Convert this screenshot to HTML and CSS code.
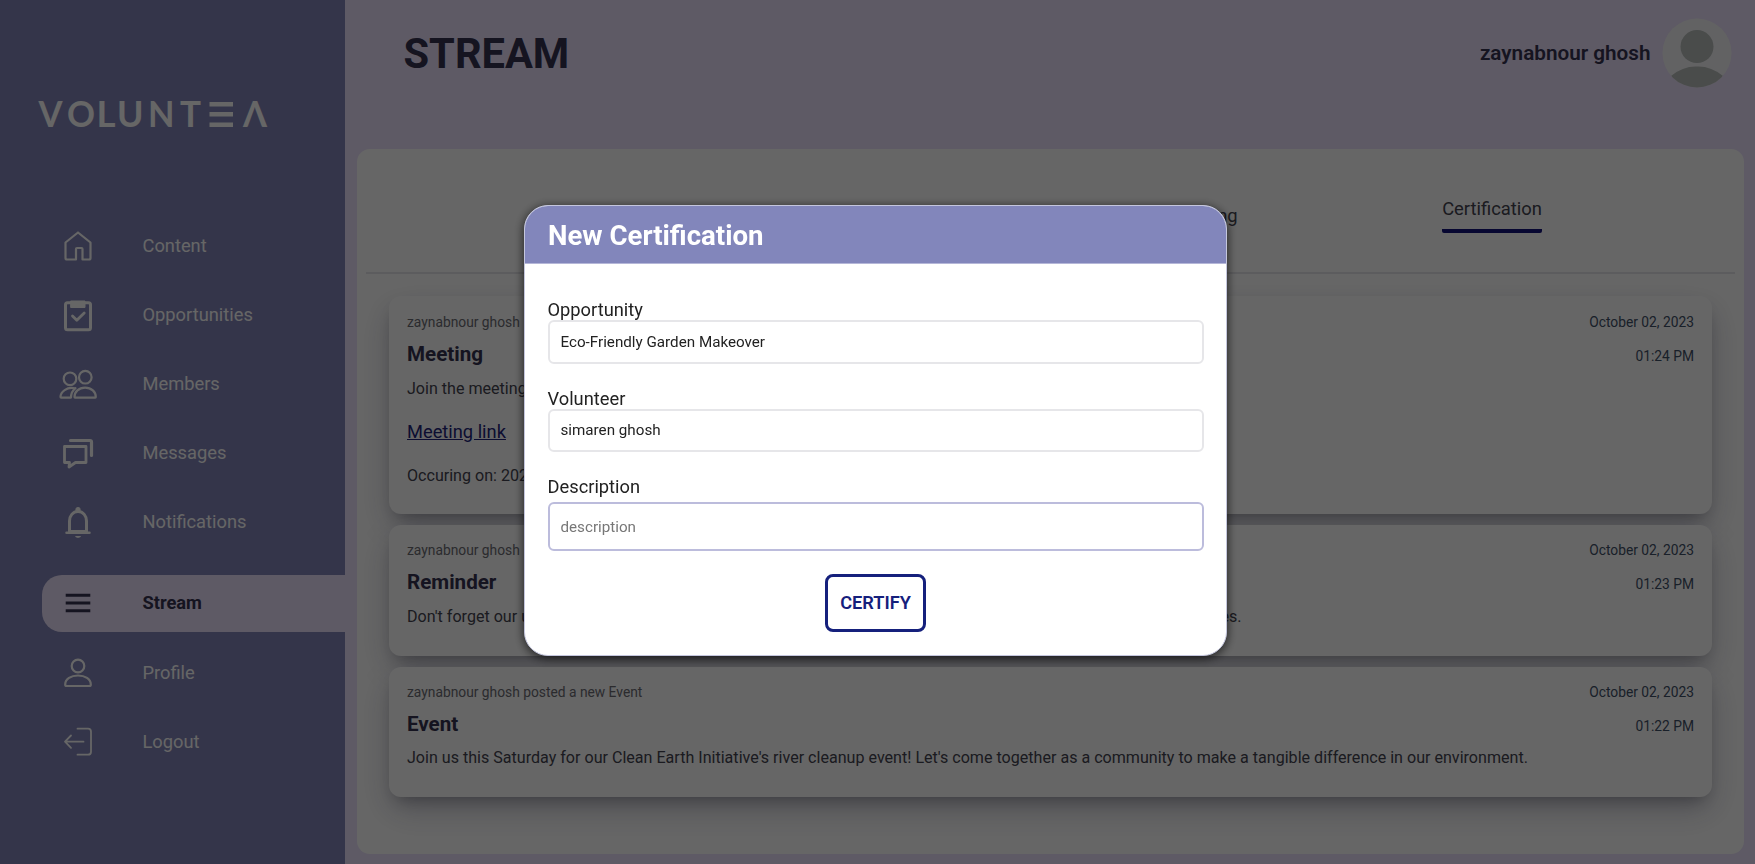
FILE: index.html
```html
<!DOCTYPE html>
<html lang="en">
<head>
<meta charset="utf-8">
<title>Voluntea - Stream</title>
<link rel="stylesheet" href="styles.css">
</head>
<body>
<div class="app">
  <aside class="sidebar">
    <svg class="logo" width="240" height="52" viewBox="0 -10 240 52" fill="#fff">
      <g class="logo-text">
        <text x="3.500" y="29" textLength="24" lengthAdjust="spacingAndGlyphs">V</text>
        <text x="32" y="29" textLength="28" lengthAdjust="spacingAndGlyphs">O</text>
        <text x="61.500" y="29" textLength="19" lengthAdjust="spacingAndGlyphs">L</text>
        <text x="82" y="29" textLength="26.500" lengthAdjust="spacingAndGlyphs">U</text>
        <text x="113" y="29" textLength="26.500" lengthAdjust="spacingAndGlyphs">N</text>
        <text x="145" y="29" textLength="21" lengthAdjust="spacingAndGlyphs">T</text>
        <text x="208" y="29" textLength="24" lengthAdjust="spacingAndGlyphs">Λ</text>
      </g>
      <rect x="174.500" y="4" width="23.500" height="4.500"/><rect x="174.500" y="14" width="23.500" height="4.500"/><rect x="174.500" y="24.500" width="23.500" height="4.500"/>
    </svg>
    <nav class="nav">
      <a class="nav-item"><svg class="icon" viewBox="0 0 40 40"><path d="M7.500 16.500 20 6.500l12.500 10V32a1.500 1.500 0 0 1-1.500 1.500h-6.500V23a1 1 0 0 0-1-1h-4.500a1 1 0 0 0-1 1v10.500H9A1.500 1.500 0 0 1 7.500 32z"/></svg><span>Content</span></a>
      <a class="nav-item"><svg class="icon" viewBox="0 0 40 40"><rect x="7.500" y="7.700" width="25" height="27" rx="2" stroke-width="3"/><path d="M13 6h14v6.500H13z" fill="#fff" stroke-width="1"/><path d="m14.500 21 4.300 4.300 7.400-7.300" stroke-width="2.800"/></svg><span>Opportunities</span></a>
      <a class="nav-item"><svg class="icon" viewBox="0 0 40 40"><circle cx="12" cy="14.800" r="6.300"/><circle cx="27.300" cy="13.200" r="6.300"/><path d="M16.500 24.300C9 22.600 2.500 28 2.500 33q0 .600.700.600H13q0-6 4.500-9.500M17 33.600h20.200q.600 0 .600-.600c0-5-4.300-9.400-10.700-9.400S16.500 28 16.500 33q0 .600.500.600z"/></svg><span>Members</span></a>
      <a class="nav-item"><svg class="icon" viewBox="0 0 40 40"><path d="M6.500 13.500h21.500v16H17.500l-6.500 4.500.500-4.500h-5z" stroke-width="2.800"/><path d="M12.500 7.500H32q1.500 0 1.500 1.500v13.500" stroke-width="3.200"/></svg><span>Messages</span></a>
      <a class="nav-item"><svg class="icon" viewBox="0 0 40 40"><path d="M11.500 29.500V19c0-5 3.300-9.500 8.500-9.500s8.500 4.500 8.500 9.500v10.500z" stroke-width="3"/><path d="M8.500 30.700h23" stroke-width="2.500"/><path d="M18 8.500V7.500a2 2 0 0 1 4 0v1M17.800 34.500a2.700 1.600 0 0 0 4.400 0z" fill="#fff" stroke-width="1.200"/></svg><span>Notifications</span></a>
      <a class="nav-item active"><svg class="icon" viewBox="0 0 40 40"><path d="M7.700 12.300h24.600M7.700 20h24.600M7.700 27.700h24.600" stroke-width="3" stroke-linecap="butt"/></svg><span>Stream</span></a>
      <a class="nav-item"><svg class="icon" viewBox="0 0 40 40"><circle cx="20" cy="13" r="6.300"/><path d="M7.200 31.500c0-5.500 5.800-9 12.800-9s12.800 3.500 12.800 9q0 1.500-1.300 1.500h-23q-1.300 0-1.300-1.500z"/></svg><span>Profile</span></a>
      <a class="nav-item"><svg class="icon" viewBox="0 0 40 40"><path d="M19.500 6.700H30q3 0 3 3v20q0 3-3 3H19.500M25.500 19.700H7.200M13 13.500l-6 6.200 6 6.200" stroke-width="1.800"/></svg><span>Logout</span></a>
    </nav>
  </aside>
  <main class="main">
    <header class="topbar">
      <h1 class="page-title">STREAM</h1>
      <div class="user"><span class="user-name">zaynabnour ghosh</span>
        <svg class="avatar" viewBox="0 0 70 70"><clipPath id="round"><circle cx="35" cy="35" r="34.500"/></clipPath><circle cx="35" cy="35" r="34.500" fill="#f5f5f7"/><g clip-path="url(#round)" fill="#b8bdbb"><circle cx="35" cy="28.600" r="16.500"/><path d="M9 58Q21 48 35 48.500 49 48 61 58L50 74H20z"/></g></svg>
      </div>
    </header>
    <section class="panel">
      <div class="tabs"><span class="tab">Meeting</span><span class="tab selected">Certification</span></div>
      <div class="posts">
        <article class="post tall">
          <div class="post-body"><p class="author">zaynabnour ghosh</p><h2 class="post-title">Meeting</h2><p class="post-text">Join the meeting</p><a class="link">Meeting link</a><p class="post-text">Occuring on: 2023</p></div>
          <div class="stamp"><span>October 02, 2023</span><span>01:24 PM</span></div>
        </article>
        <article class="post">
          <div class="post-body"><p class="author">zaynabnour ghosh</p><h2 class="post-title">Reminder</h2><div class="split-text"><p class="post-text">Don't forget our u</p><p class="post-text">es.</p></div></div>
          <div class="stamp"><span>October 02, 2023</span><span>01:23 PM</span></div>
        </article>
        <article class="post">
          <div class="post-body"><p class="author">zaynabnour ghosh posted a new Event</p><h2 class="post-title">Event</h2><p class="post-text">Join us this Saturday for our Clean Earth Initiative's river cleanup event! Let's come together as a community to make a tangible difference in our environment.</p></div>
          <div class="stamp"><span>October 02, 2023</span><span>01:22 PM</span></div>
        </article>
      </div>
    </section>
  </main>
</div>
<div class="overlay">
  <form class="modal">
    <h2 class="modal-title">New Certification</h2>
    <div class="modal-body">
      <label class="field"><span>Opportunity</span><input class="input" value="Eco-Friendly Garden Makeover"></label>
      <label class="field"><span>Volunteer</span><input class="input" value="simaren ghosh"></label>
      <label class="field last"><span>Description</span><input class="input outlined" placeholder="description"></label>
      <button class="certify" type="button">CERTIFY</button>
    </div>
  </form>
</div>
</body>
</html>
```
FILE: styles.css
```css
* { box-sizing: border-box; }
body { margin: 0; font-family: Roboto, "Liberation Sans", sans-serif; color: #363250; overflow: hidden; }
h1, h2, p { margin: 0; }
.app { display: flex; width: 1755px; height: 864px; background: #ebe1fc; }

.sidebar { width: 345px; padding: 88px 0 0; background: #8285b9; display: flex; flex-direction: column; }
.logo { display: block; margin-left: 35px; overflow: visible; flex: none; }
.logo-text { font: 700 35.5px Lato, sans-serif; }
.nav { margin: 77px 0 0 42px; display: flex; flex-direction: column; gap: 12.2px; }
.nav-item { height: 57px; display: flex; align-items: center; gap: 44.5px; padding-left: 16px; color: #fff; font-size: 18.3px; font-weight: 450; }
.nav-item.active { margin-top: 12px; background: #ebe1fc; border-radius: 20px 0 0 20px; color: #363250; font-weight: 700; }
.nav-item span { position: relative; top: -.5px; }
.icon { width: 40px; height: 40px; fill: none; stroke: currentColor; stroke-width: 2.2; stroke-linejoin: round; stroke-linecap: round; }

.main { flex: 1; padding: 0 11px 10px 12px; display: flex; flex-direction: column; }
.topbar { height: 149px; display: flex; justify-content: space-between; align-items: flex-start; padding: 18px 12px 0 46.5px; }
.page-title { font-size: 41.6px; line-height: 72px; font-weight: 700; }
.user { display: flex; align-items: center; gap: 11.5px; height: 70px; }
.user-name { font-size: 20.7px; font-weight: 600; }
.avatar { width: 70px; height: 70px; }
.panel { flex: 1; background: #fff; border-radius: 13px; padding: 0 9px; }
.tabs { height: 125px; border-bottom: 2px solid #e6e6ea; display: flex; justify-content: flex-end; padding: 48px 193px 0 0; gap: 204.5px; font-size: 18.4px; line-height: 23px; color: #444450; }
.tab { padding-top: 7px; }
.tab.selected { height: 36px; padding-top: 0; border-bottom: 4px solid #12127a; border-radius: 2px; }

.posts { padding: 22px 23px 0; display: flex; flex-direction: column; gap: 11px; }
.post { position: relative; height: 130.5px; background: #fff; border-radius: 12px; padding: 16px 18px 0; display: flex; justify-content: space-between; box-shadow: 0 13px 27px -5px rgba(50, 50, 93, .25), 0 8px 16px -8px rgba(0, 0, 0, .3), 0 14px 36px rgba(50, 50, 80, .1); }
.post.tall { height: 218px; padding-top: 17px; }
.author { font-size: 13.8px; line-height: 18px; color: #6c6c74; }
.post-title { font-size: 20.6px; line-height: 24px; margin-top: 11px; }
.post-text { font-size: 16.09px; line-height: 20px; margin-top: 12.5px; color: #444450; white-space: nowrap; }
.link { display: block; font-size: 18.3px; line-height: 22px; margin: 22px 0 23.5px; color: #22247a; text-decoration: underline; }
.split-text { display: flex; justify-content: space-between; width: 834.5px; }
.stamp { display: flex; flex-direction: column; align-items: flex-end; gap: 16px; font-size: 13.8px; line-height: 18px; color: #3f5068; }

.overlay { position: fixed; inset: 0; background: rgba(0, 0, 0, .6); display: flex; justify-content: center; align-items: flex-start; padding: 205px 4px 0 0; }
.modal { width: 703px; height: 451px; border: 1px solid #c4c6dd; border-radius: 24px; overflow: hidden; background: #fff; box-shadow: 0 2px 10px 1px rgba(0, 0, 0, .6); }
.modal-title { height: 58px; padding: 0 23px; background: #8286bb; border-bottom: 1px solid #b5b7d8; color: #fff; font-size: 27.6px; line-height: 59px; }
.modal-body { padding: 35px 22.5px 0; display: flex; flex-direction: column; color: #222; }
.field { display: flex; flex-direction: column; font-size: 18.3px; line-height: 21px; margin-bottom: 24px; }
.field.last { margin-bottom: 22.5px; }
.input { height: 43.5px; width: 656px; padding: 0 11px; border: 2px solid #e6e6e9; border-radius: 6px; background: #fff; color: #222; font: 15.2px Roboto, sans-serif; outline: none; }
.input::placeholder { color: #777; opacity: 1; }
.input.outlined { height: 49px; margin-top: 5px; border-color: #bcbcdc; }
.certify { align-self: center; width: 101px; height: 58px; padding: 0; border: 3px solid #15207c; border-radius: 8px; background: #fff; color: #15207c; font: 600 18.2px Roboto, sans-serif; }
```
